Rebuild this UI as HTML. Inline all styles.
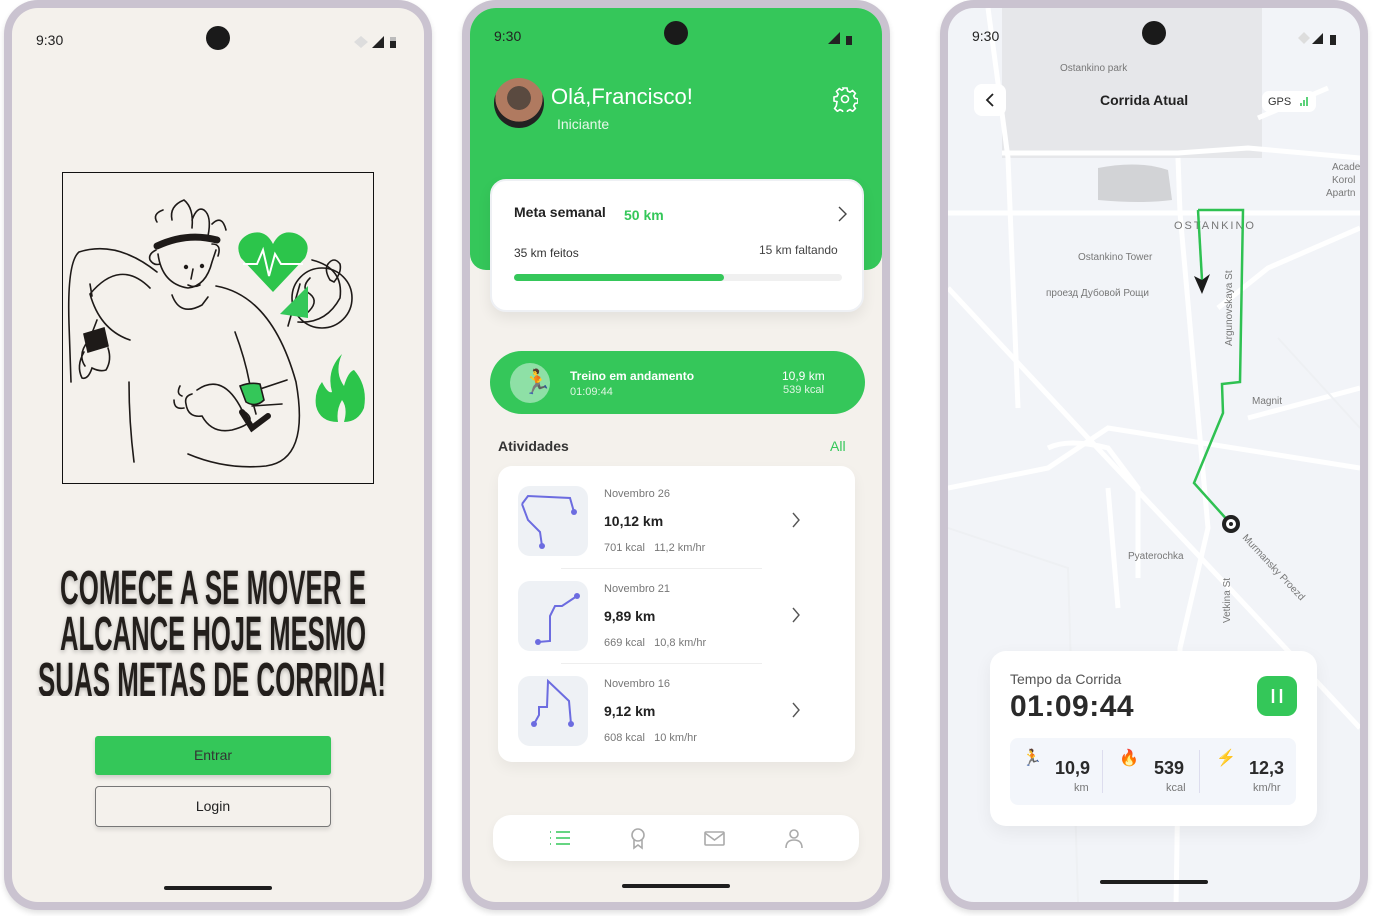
<!DOCTYPE html>
<html><head><meta charset="utf-8"><style>
*{box-sizing:border-box;margin:0;padding:0}
body{width:1378px;height:916px;background:#fff;position:relative;overflow:hidden;font-family:"Liberation Sans",sans-serif;color:#222}
.ph{position:absolute;top:0;width:428px;height:910px;background:#cac3d0;border-radius:34px;box-shadow:0 3px 6px rgba(0,0,0,.12)}
.in{position:absolute;left:8px;top:8px;right:8px;bottom:8px;border-radius:26px;overflow:hidden;background:#f4f1ec}
.a{position:absolute}
.time{position:absolute;top:24px;font-size:14px;color:#222}
.cam{position:absolute;width:24px;height:24px;border-radius:50%;background:#1a1a1a}
.home{position:absolute;height:4px;border-radius:2px;background:#1e1e1e}
.card{position:absolute;background:#fff}
.g{color:#34c759}
.sm{font-size:11px;color:#777}
</style></head><body>

<!-- Phone 1 -->
<div class="ph" style="left:4px">
<div class="in">
 <div class="time" style="left:24px">9:30</div>
 <div class="cam" style="left:194px;top:18px"></div>
 <svg class="a" style="left:340px;top:26px" width="52" height="16"><path d="M2 8 L9 2 L16 8 L9 14Z" fill="#ddd"/><path d="M20 14 L32 2 L32 14Z" fill="#222"/><rect x="38" y="3" width="6" height="11" fill="#222"/><rect x="38" y="3" width="6" height="4" fill="#bbb"/></svg>
 <div class="a" style="left:50px;top:164px;width:312px;height:312px;border:1px solid #111"></div>
 <svg class="a" style="left:50px;top:164px" width="312" height="312" fill="none" stroke="#1e1a18" stroke-width="1.6" stroke-linecap="round">
  <path d="M95 50 q-5 -8 6 -12 M110 48 q-3 -14 12 -20 q10 8 8 28 M130 48 q5 -14 12 -10 q8 6 4 26 M150 52 q10 -10 14 6"/>
  <path d="M95 74 q30 -14 60 -6" stroke-width="7"/>
  <path d="M94 78 q-8 4 -6 10 q4 6 10 4 M150 72 q10 0 6 12 M96 82 q4 30 30 34 q18 -2 24 -26 l4 -12"/>
  <circle cx="124" cy="95" r="1.4" fill="#1e1a18"/><circle cx="140" cy="94" r="1.4" fill="#1e1a18"/>
  <path d="M131 97 l-2 10 M126 113 q6 3 12 0 M110 123 q8 22 30 10 l6 -8"/>
  <path d="M95 100 q-40 -32 -78 -20 q-12 10 -10 72 l2 58 M88 116 q-30 -30 -60 6 q10 36 40 46 M28 112 l2 12 M35 148 q-6 16 -8 20 q-12 14 -4 26"/>
  <path d="M154 114 q56 10 80 96 q14 78 -30 84 q-40 4 -78 -12 M173 160 q12 32 16 60 l36 -12 M220 232 l-30 2 M188 220 l6 22"/>
  <path d="M67 210 q0 40 5 80 M135 218 q26 -18 45 20 q20 12 -10 20 q-20 4 -30 -14 q-14 2 -16 -12 q-2 -8 6 -10 M118 214 q-4 8 2 10 M112 228 q0 10 10 8"/>
  <path d="M178 214 q10 -4 20 -2 l4 16 q-8 8 -18 2 z" fill="#34c759"/>
  <path d="M180 240 l10 16 l16 -12" stroke-width="6"/>
  <path d="M22 162 l20 -6 l4 18 l-20 6 z" fill="#1e1a18"/>
  <path d="M22 180 q-8 14 -2 26 q6 2 10 -10 q8 4 14 2 q6 -10 2 -22"/>
  <path d="M238 112 l-12 42 M248 106 q-10 10 0 16 q10 8 -4 20 M236 150 q28 2 42 -24 q4 -30 -28 -38" />
  <circle cx="260" cy="126" r="30"/>
  <path d="M268 108 q-6 -10 -2 -16 q6 -8 12 0 q2 8 -6 18z"/>
  <path d="M218 142 l28 -28 l0 32z" fill="#34c759" stroke="none"/>
 </svg>
 <svg class="a" style="left:225px;top:224px" width="72" height="62"><path d="M36 60 L4 26 Q-4 10 12 2 Q28 -4 36 12 Q44 -4 60 2 Q76 10 68 26Z" fill="#2cc54b"/><path d="M6 32 H20 L26 18 L32 44 L38 22 L44 32 H66" stroke="#fff" stroke-width="2" fill="none"/></svg>
 <svg class="a" style="left:302px;top:344px" width="56" height="72"><path d="M28 2 Q20 20 30 34 Q34 20 40 18 Q54 34 50 56 Q44 70 30 70 Q34 56 28 48 Q22 58 24 70 Q6 70 2 54 Q0 40 8 30 Q14 42 18 40 Q12 18 28 2Z" fill="#2cc54b"/></svg>
 <svg class="a" style="left:20px;top:548px" width="390" height="140"><g font-family="Liberation Sans Narrow,Liberation Sans,sans-serif" font-weight="bold" font-size="48" fill="#231f1c" style="filter:drop-shadow(0 2px 2px rgba(0,0,0,.25))">
  <text x="28" y="48" textLength="306" lengthAdjust="spacingAndGlyphs">COMECE A SE MOVER E</text>
  <text x="28" y="94" textLength="306" lengthAdjust="spacingAndGlyphs">ALCANCE HOJE MESMO</text>
  <text x="6" y="140" textLength="348" lengthAdjust="spacingAndGlyphs">SUAS METAS DE CORRIDA!</text></g></svg>
 <div class="a" style="left:83px;top:728px;width:236px;height:39px;background:#34c759;border-radius:3px;box-shadow:0 3px 4px rgba(0,0,0,.15);text-align:center;line-height:39px;font-size:14px;color:#333">Entrar</div>
 <div class="a" style="left:83px;top:778px;width:236px;height:41px;border:1.5px solid #777;border-radius:4px;box-shadow:0 3px 4px rgba(0,0,0,.1);text-align:center;line-height:38px;font-size:14px;color:#222">Login</div>
 <div class="home" style="left:152px;top:878px;width:108px"></div>
</div></div>

<!-- Phone 2 -->
<div class="ph" style="left:462px">
<div class="in">
 <div class="a" style="left:0;top:0;width:412px;height:262px;background:#35c75a;border-radius:0 0 16px 16px"></div>
 <div class="time" style="left:24px;top:20px">9:30</div>
 <div class="cam" style="left:194px;top:13px"></div>
 <svg class="a" style="left:348px;top:22px" width="44" height="16"><path d="M10 14 L22 2 L22 14Z" fill="#222"/><rect x="28" y="6" width="6" height="9" fill="#222"/></svg>
 <div class="a" style="left:24px;top:70px;width:50px;height:50px;border-radius:50%;background:radial-gradient(circle at 50% 40%,#5a4a40 0 30%,#b07a60 31% 60%,#222 61%)"></div>
 <div class="a" style="left:81px;top:76px;font-size:22px;color:#fff">Olá,Francisco!</div>
 <div class="a" style="left:87px;top:108px;font-size:14px;color:#e8f8ea">Iniciante</div>
 <svg class="a" style="left:362px;top:78px" width="26" height="26" fill="none" stroke="#fff" stroke-width="1.6"><circle cx="13" cy="13" r="3.5"/><path d="M11 2h4l.6 3 2.4 1.2 2.6-1.7 2.8 2.8-1.7 2.6 1.2 2.4 3 .6v4l-3 .6-1.2 2.4 1.7 2.6-2.8 2.8-2.6-1.7-2.4 1.2-.6 3h-4l-.6-3-2.4-1.2-2.6 1.7-2.8-2.8 1.7-2.6L5 15.6 2 15v-4l3-.6L6.2 8 4.5 5.4l2.8-2.8L9.9 4.3 11.4 3z"/></svg>
 <div class="card" style="left:20px;top:171px;width:374px;height:133px;border-radius:16px;box-shadow:0 6px 14px rgba(0,0,0,.07);border:2px solid #eef0f4"></div>
 <div class="a" style="left:44px;top:196px;font-size:14px;font-weight:bold;color:#222">Meta semanal</div>
 <div class="a" style="left:154px;top:199px;font-size:14px;font-weight:bold"><span class="g">50 km</span></div>
 <svg class="a" style="left:366px;top:197px" width="12" height="18"><path d="M3 2 L10 9 L3 16" stroke="#444" stroke-width="1.4" fill="none"/></svg>
 <div class="a" style="left:44px;top:238px;font-size:12px;color:#333">35 km feitos</div>
 <div class="a" style="left:289px;top:235px;font-size:12px;color:#444">15 km faltando</div>
 <div class="a" style="left:44px;top:266px;width:328px;height:7px;border-radius:4px;background:#f0f0f0"></div>
 <div class="a" style="left:44px;top:266px;width:210px;height:7px;border-radius:4px;background:#35c75a"></div>
 <div class="a" style="left:20px;top:343px;width:375px;height:63px;border-radius:32px;background:#35c75a"></div>
 <div class="a" style="left:40px;top:355px;width:40px;height:40px;border-radius:50%;background:#8ee0a6"></div>
 <div class="a" style="left:52px;top:358px;font-size:24px;line-height:34px">🏃</div>
 <div class="a" style="left:100px;top:361px;font-size:12px;font-weight:bold;color:#fff">Treino em andamento</div>
 <div class="a" style="left:100px;top:378px;font-size:11px;color:#dff5e3">01:09:44</div>
 <div class="a" style="left:312px;top:361px;font-size:12px;color:#fff">10,9 km</div>
 <div class="a" style="left:313px;top:376px;font-size:11px;color:#e0f6e4">539 kcal</div>
 <div class="a" style="left:28px;top:430px;font-size:14px;font-weight:bold;color:#333">Atividades</div>
 <div class="a" style="left:360px;top:430px;font-size:14px" ><span class="g">All</span></div>
 <div class="card" style="left:28px;top:458px;width:357px;height:296px;border-radius:14px;box-shadow:0 6px 14px rgba(0,0,0,.05)"></div>
 <div class="a" style="left:91px;top:560px;width:201px;height:1px;background:#eee"></div>
 <div class="a" style="left:91px;top:655px;width:201px;height:1px;background:#eee"></div>
 <svg class="a" style="left:48px;top:478px" width="70" height="260">
  <rect width="70" height="70" rx="12" fill="#eef1f5"/><rect y="95" width="70" height="70" rx="12" fill="#eef1f5"/><rect y="190" width="70" height="70" rx="12" fill="#eef1f5"/>
  <g stroke="#6c6ce0" stroke-width="2" fill="none"><path d="M4 18 L10 10 L52 12 L56 26 M4 18 L10 34 L22 46 L24 60"/><path d="M20 156 L32 155 L32 130 L37 120 L44 120 L59 110"/><path d="M16 238 L21 229 L21 221 L29 221 L30 195 L51 215 L53 238"/></g>
  <g fill="#6c6ce0"><circle cx="56" cy="26" r="3"/><circle cx="24" cy="60" r="3"/><circle cx="20" cy="156" r="3"/><circle cx="59" cy="110" r="3"/><circle cx="16" cy="238" r="3"/><circle cx="53" cy="238" r="3"/></g>
 </svg>
 <div class="a" style="left:134px;top:480px;font-size:11px;color:#777">Novembro 26</div>
 <div class="a" style="left:134px;top:505px;font-size:14px;font-weight:bold;color:#222">10,12 km</div>
 <div class="a" style="left:134px;top:534px;font-size:11px;color:#777">701 kcal &nbsp; 11,2 km/hr</div>
 <div class="a" style="left:134px;top:575px;font-size:11px;color:#777">Novembro 21</div>
 <div class="a" style="left:134px;top:600px;font-size:14px;font-weight:bold;color:#222">9,89 km</div>
 <div class="a" style="left:134px;top:629px;font-size:11px;color:#777">669 kcal &nbsp; 10,8 km/hr</div>
 <div class="a" style="left:134px;top:670px;font-size:11px;color:#777">Novembro 16</div>
 <div class="a" style="left:134px;top:695px;font-size:14px;font-weight:bold;color:#222">9,12 km</div>
 <div class="a" style="left:134px;top:724px;font-size:11px;color:#777">608 kcal &nbsp; 10 km/hr</div>
 <svg class="a" style="left:320px;top:502px" width="12" height="210" fill="none" stroke="#555" stroke-width="1.4"><path d="M3 3 L9 10 L3 17 M3 98 L9 105 L3 112 M3 193 L9 200 L3 207"/></svg>
 <div class="card" style="left:23px;top:807px;width:366px;height:46px;border-radius:18px;box-shadow:0 4px 10px rgba(0,0,0,.05)"></div>
 <svg class="a" style="left:78px;top:820px" width="270" height="22" fill="none" stroke-width="1.6">
  <g stroke="#34c759"><path d="M8 4h14M8 10h14M8 16h14"/><path d="M2 4h1M2 10h1M2 16h1"/></g>
  <g stroke="#aaa"><circle cx="90" cy="7" r="6"/><path d="M86 12 l0 8 l4 -3 l4 3 l0 -8"/><rect x="157" y="4" width="19" height="13" rx="1"/><path d="M157 5 l9.5 7 l9.5 -7"/><circle cx="246" cy="6" r="4"/><path d="M238 20 q0 -8 8 -8 q8 0 8 8"/></g>
 </svg>
 <div class="home" style="left:152px;top:876px;width:108px"></div>
</div></div>

<!-- Phone 3 -->
<div class="ph" style="left:940px">
<div class="in" style="background:#f2f4f8">
 <svg class="a" style="left:0;top:0" width="412" height="894">
  <rect x="54" y="0" width="260" height="150" fill="#e6e7ea"/>
  <path d="M150 160 q40 -8 70 2 l4 30 q-30 4 -74 0z" fill="#d2d3d6"/>
  <g stroke="#fff" fill="none" stroke-width="5">
   <path d="M40 0 L60 150 L70 400"/><path d="M54 145 H230 L300 140 L412 150"/><path d="M0 205 H412"/><path d="M230 150 L232 205 L260 520 L232 640 L228 900"/>
   <path d="M0 280 L140 430 L300 600 L412 720"/><path d="M300 410 L412 380"/><path d="M0 480 L100 460 L160 420 L412 460"/>
   <path d="M100 440 q20 -10 60 0 l30 40 L190 570"/><path d="M160 480 L170 600"/><path d="M270 300 L320 260 L412 220"/><path d="M310 110 L380 80"/>
  </g>
  <g stroke="#eef0f3" fill="none" stroke-width="2"><path d="M0 520 L120 560 L130 894"/><path d="M330 330 L412 420"/></g>
  <g font-family="Liberation Sans,sans-serif" font-size="10" fill="#777">
   <text x="112" y="63">Ostankino park</text><text x="130" y="252">Ostankino Tower</text><text x="98" y="288">проезд Дубовой Рощи</text>
   <text x="226" y="221" font-size="11" letter-spacing="2">OSTANKINO</text><text x="304" y="396">Magnit</text><text x="180" y="551">Pyaterochka</text>
   <text x="384" y="162">Acade</text><text x="384" y="175">Korol</text><text x="378" y="188">Apartn</text>
   <text transform="translate(284,338) rotate(-90)">Argunovskaya St</text><text transform="translate(282,615) rotate(-90)">Vetkina St</text>
   <text transform="translate(294,530) rotate(47)">Murmansky Proezd</text>
  </g>
  <path d="M250 202 L295 202 L292 374 L274 376 L275 405 L246 475 L282 515" stroke="#2fc152" stroke-width="2.5" fill="none"/>
  <path d="M250 202 L254 272" stroke="#2fc152" stroke-width="2.5" fill="none"/>
  <path d="M246 268 L254 286 L262 266 L254 272Z" fill="#1b1b1b"/>
  <circle cx="283" cy="516" r="7" fill="#fff" stroke="#222" stroke-width="4"/><circle cx="283" cy="516" r="2" fill="#222"/>
 </svg>
 <div class="time" style="left:24px;top:20px">9:30</div>
 <div class="cam" style="left:194px;top:13px"></div>
 <svg class="a" style="left:348px;top:22px" width="44" height="16"><path d="M2 8 L8 2 L14 8 L8 14Z" fill="#ddd"/><path d="M16 14 L27 3 L27 14Z" fill="#222"/><rect x="34" y="5" width="6" height="10" fill="#222"/></svg>
 <div class="card" style="left:26px;top:76px;width:32px;height:32px;border-radius:8px"></div>
 <svg class="a" style="left:36px;top:84px" width="12" height="16"><path d="M9 2 L3 8 L9 14" stroke="#222" stroke-width="1.8" fill="none"/></svg>
 <div class="a" style="left:152px;top:84px;font-size:14px;font-weight:bold;color:#222">Corrida Atual</div>
 <div class="card" style="left:314px;top:83px;width:54px;height:21px;border-radius:7px"></div>
 <div class="a" style="left:320px;top:88px;font-size:11px;color:#333">GPS</div>
 <svg class="a" style="left:351px;top:87px" width="12" height="12"><path d="M2 11v-3M5 11v-6M8 11v-9" stroke="#34c759" stroke-width="1.6"/></svg>
 <div class="card" style="left:42px;top:643px;width:327px;height:175px;border-radius:16px;box-shadow:0 6px 18px rgba(0,0,0,.06)"></div>
 <div class="a" style="left:62px;top:663px;font-size:14px;color:#555">Tempo da Corrida</div>
 <div class="a" style="left:62px;top:682px;font-size:30px;font-weight:bold;color:#2a2a2a;letter-spacing:.5px">01:09:44</div>
 <div class="a" style="left:309px;top:668px;width:40px;height:40px;border-radius:10px;background:#34c759"></div>
 <svg class="a" style="left:309px;top:668px" width="40" height="40"><path d="M16 13v14M24 13v14" stroke="#fff" stroke-width="2.4"/></svg>
 <div class="a" style="left:62px;top:730px;width:286px;height:67px;border-radius:8px;background:#f3f6fb"></div>
 <div class="a" style="left:154px;top:742px;width:1px;height:43px;background:#dde"></div>
 <div class="a" style="left:251px;top:742px;width:1px;height:43px;background:#dde"></div>
 <div class="a" style="left:74px;top:740px;font-size:16px">🏃</div>
 <div class="a" style="left:171px;top:740px;font-size:16px">🔥</div>
 <div class="a" style="left:268px;top:740px;font-size:16px;color:#f5b82e">⚡</div>
 <div class="a" style="left:107px;top:750px;font-size:18px;font-weight:bold;color:#2a2a2a">10,9</div>
 <div class="a" style="left:126px;top:774px;font-size:11px;color:#777">km</div>
 <div class="a" style="left:206px;top:750px;font-size:18px;font-weight:bold;color:#2a2a2a">539</div>
 <div class="a" style="left:218px;top:774px;font-size:11px;color:#777">kcal</div>
 <div class="a" style="left:301px;top:750px;font-size:18px;font-weight:bold;color:#2a2a2a">12,3</div>
 <div class="a" style="left:305px;top:774px;font-size:11px;color:#777">km/hr</div>
 <div class="home" style="left:152px;top:872px;width:108px"></div>
</div></div>
</body></html>
